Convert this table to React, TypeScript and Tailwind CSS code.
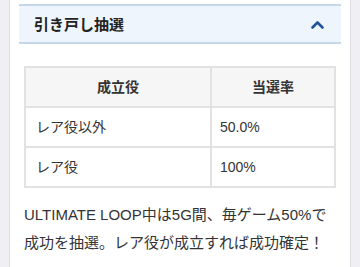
const rows = [
  { role: 'レア役以外', rate: '50.0%' },
  { role: 'レア役', rate: '100%' },
];

export default function App() {
  return (
    <div className="h-[267px] w-[360px] overflow-hidden bg-[#efeff4] font-['Liberation_Sans','Noto_Sans_CJK_JP',sans-serif] text-[#333]">
      <div className="mx-[9px] h-full border-x border-[#dcdce2] bg-white px-[9px] pt-[4px]">
        <div className="flex h-[40px] items-center justify-between border-y-2 border-[#c6d7ea] bg-[#eef5fc] pl-[15px] pr-[17px]">
          <h3 className="text-[15px] font-bold leading-none text-[#222]">引き戸し抽選</h3>
          <svg width="13" height="9" viewBox="0 0 13 9" fill="none">
            <path d="M1.5 7.5 6.5 2.5 11.5 7.5" stroke="#1f5597" strokeWidth="2.6" strokeLinecap="round" strokeLinejoin="round" />
          </svg>
        </div>

        <div className="px-[5px] pt-[22px]">
          <table className="w-full border-collapse text-[14px]">
            <thead>
              <tr className="h-[40px] bg-[#f6f6f6]">
                <th className="w-[186px] border-2 border-[#e2e2e2] font-bold">成立役</th>
                <th className="border-2 border-[#e2e2e2] font-bold">当選率</th>
              </tr>
            </thead>
            <tbody>
              {rows.map((r) => (
                <tr key={r.role} className="h-[40px]">
                  <td className="border-2 border-[#e2e2e2] pl-[10px]">{r.role}</td>
                  <td className="border-2 border-[#e2e2e2] pl-[8px]">{r.rate}</td>
                </tr>
              ))}
            </tbody>
          </table>

          <p className="mt-[13px] text-[15px] leading-[28px]">
            ULTIMATE LOOP中は5G間、毎ゲーム50%で成功を抽選。レア役が成立すれば成功確定！
          </p>
        </div>
      </div>
    </div>
  );
}
